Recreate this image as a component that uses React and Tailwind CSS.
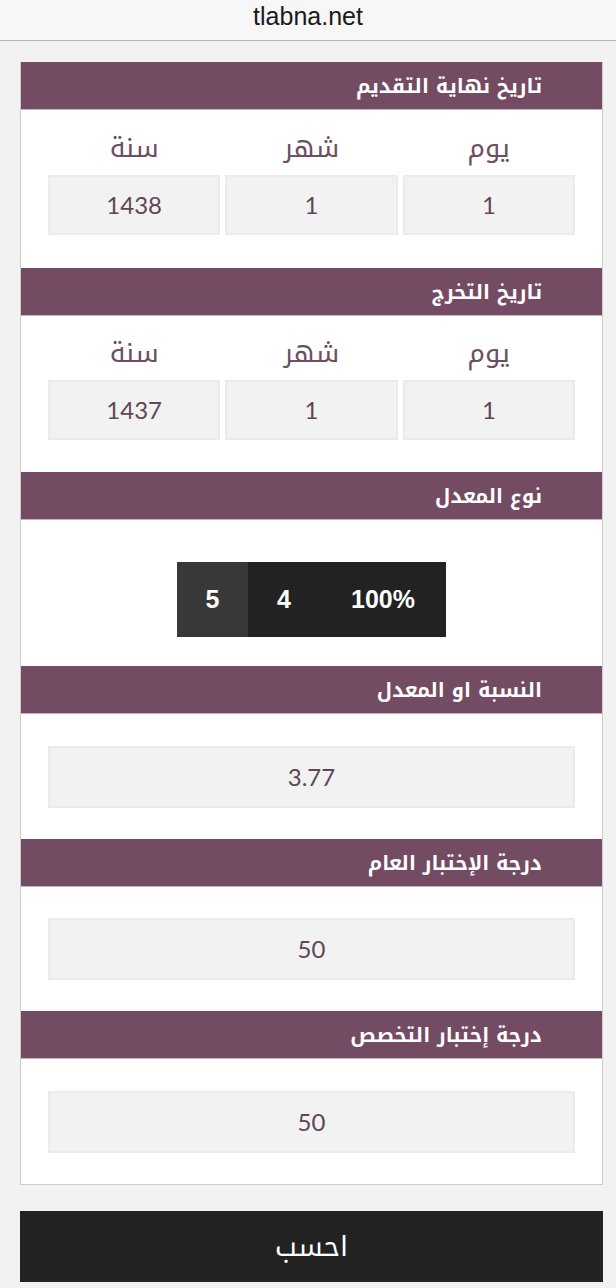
import React from 'react'

const arabic = { fontFamily: '"Noto Kufi Arabic", "Noto Sans Arabic", "DejaVu Sans", sans-serif' }
const latin = { fontFamily: 'Lato, "Liberation Sans", sans-serif' }

function SectionHeader({ title }) {
  return (
    <div
      className="h-[48px] flex items-center justify-start pr-[60px] bg-[#734b62] border-b border-[#c7b4c0] text-white text-[20px] font-bold"
      style={arabic}
    >
      {title}
    </div>
  )
}

function Field({ value, tall }) {
  return (
    <div
      className={
        (tall ? 'h-[62px]' : 'h-[60px]') +
        ' flex items-center justify-center bg-[#f2f2f2] border-2 border-[#ebebeb] text-[#5f4756] text-[24px]'
      }
      style={latin}
    >
      {value}
    </div>
  )
}

function DateBlock({ day, month, year, first }) {
  return (
    <div className={first ? 'px-[27px] pt-[20px] pb-[33px]' : 'px-[27px] pt-[19px] pb-[32px]'}>
      <div className="grid grid-cols-3 gap-[5px] h-[36px] items-center text-[#6e4e63] text-[27px] leading-none" style={arabic}>
        <div className="text-center">يوم</div>
        <div className="text-center">شهر</div>
        <div className="text-center">سنة</div>
      </div>
      <div className="grid grid-cols-3 gap-[5px] mt-[9px]">
        <Field value={day} />
        <Field value={month} />
        <Field value={year} />
      </div>
    </div>
  )
}

export default function App() {
  return (
    <div dir="rtl" className="min-h-screen bg-[#f2f2f2] pb-[6px]">
      {/* address bar */}
      <div className="h-[41px] bg-[#f7f7f7] border-b border-[#b5b5b5] flex items-center justify-center">
        <span className="text-[25px] leading-none text-[#1a1a1a] -mt-[8px]" style={{ fontFamily: '"Liberation Sans", Arial, sans-serif' }}>
          tlabna.net
        </span>
      </div>

      <div className="mr-[13px] ml-[20px] mt-[21px]">
        <div className="bg-white border-x border-b border-[#cccccc]">
          <SectionHeader title="تاريخ نهاية التقديم" />
          <DateBlock day="1" month="1" year="1438" first />

          <SectionHeader title="تاريخ التخرج" />
          <DateBlock day="1" month="1" year="1437" />

          <SectionHeader title="نوع المعدل" />
          <div className="flex justify-center pt-[42px] pb-[29px]">
            <div dir="ltr" className="flex h-[75px] text-white text-[25px] font-bold" style={{ fontFamily: '"Liberation Sans", Arial, sans-serif' }}>
              <button className="w-[71px] bg-[#383838] flex items-center justify-center">5</button>
              <button className="w-[72px] bg-[#222222] flex items-center justify-center">4</button>
              <button className="w-[126px] bg-[#222222] flex items-center justify-center">100%</button>
            </div>
          </div>

          <SectionHeader title="النسبة او المعدل" />
          <div className="px-[27px] pt-[32px] pb-[31px]">
            <Field value="3.77" tall />
          </div>

          <SectionHeader title="درجة الإختبار العام" />
          <div className="px-[27px] pt-[31px] pb-[31px]">
            <Field value="50" tall />
          </div>

          <SectionHeader title="درجة إختبار التخصص" />
          <div className="px-[27px] pt-[32px] pb-[31px]">
            <Field value="50" tall />
          </div>
        </div>

        <button
          className="mt-[26px] w-full h-[71px] bg-[#222222] text-white text-[28px] flex items-center justify-center"
          style={arabic}
        >
          احسب
        </button>
      </div>
    </div>
  )
}
